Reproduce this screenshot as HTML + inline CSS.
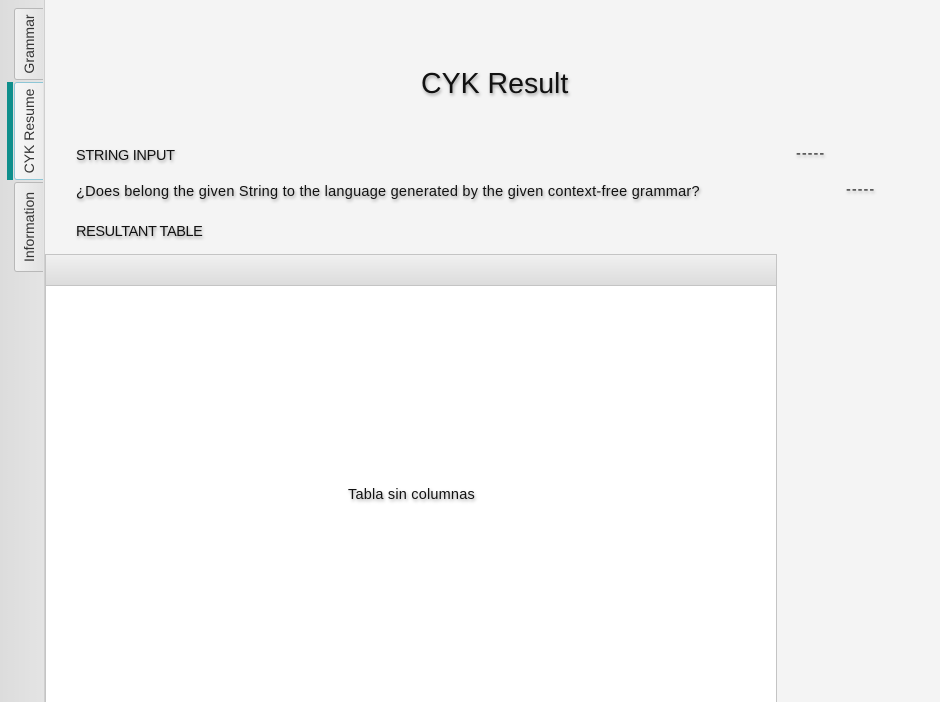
<!DOCTYPE html>
<html style="overflow:hidden;height:702px"><head><style>
body{margin:0;width:940px;height:702px;background:#f4f4f4;font-family:"Liberation Sans",sans-serif;position:relative;overflow:hidden;color:#111}
.strip{position:absolute;left:0;top:0;width:44px;height:702px;background:linear-gradient(to right,#dcdcdc,#e4e4e4);border-right:1px solid #cfcfcf}
.tab{position:absolute;left:14px;width:29px;background:linear-gradient(to right,#f0f0f0,#e2e2e2);border:1px solid #b8b8b8;border-right:none;border-radius:3px 0 0 3px;box-sizing:border-box}
.tab span{position:absolute;left:50%;top:50%;transform:translate(-50%,-50%) rotate(-90deg);white-space:nowrap;font-size:14px;color:#333}
.t{position:absolute;font-size:14.5px;white-space:nowrap;text-shadow:1px 2px 3px rgba(0,0,0,.35)}
</style></head><body>
<div class="strip"></div>
<div class="tab" style="top:8px;height:72px"><span>Grammar</span></div>
<div class="tab" style="top:82px;height:98px;background:linear-gradient(to right,#f7f7f7,#ececec);border-color:#8cc6d6"><span>CYK Resume</span></div>
<div style="position:absolute;left:7px;top:82px;width:6px;height:98px;background:#0f8f8c"></div>
<div class="tab" style="top:182px;height:90px"><span>Information</span></div>
<div class="t" style="left:421px;top:68px;font-size:28.5px">CYK Result</div>
<div class="t" style="left:76px;top:148px;letter-spacing:-0.3px">STRING INPUT</div>
<div class="t" style="left:796px;top:146px;letter-spacing:1px">-----</div>
<div class="t" style="left:76px;top:184px;letter-spacing:0.25px">¿Does belong the given String to the language generated by the given context-free grammar?</div>
<div class="t" style="left:846px;top:182px;letter-spacing:1px">-----</div>
<div class="t" style="left:76px;top:224px;letter-spacing:-0.4px">RESULTANT TABLE</div>
<div style="position:absolute;left:45px;top:254px;width:732px;height:448px;border:1px solid #c4c4c4;border-bottom:none;background:#fff;box-sizing:border-box">
<div style="height:30px;background:linear-gradient(#f0f0f0,#dcdcdc);border-bottom:1px solid #c4c4c4"></div>
</div>
<div class="t" style="left:348px;top:487px;letter-spacing:0.2px">Tabla sin columnas</div>
</body></html>
